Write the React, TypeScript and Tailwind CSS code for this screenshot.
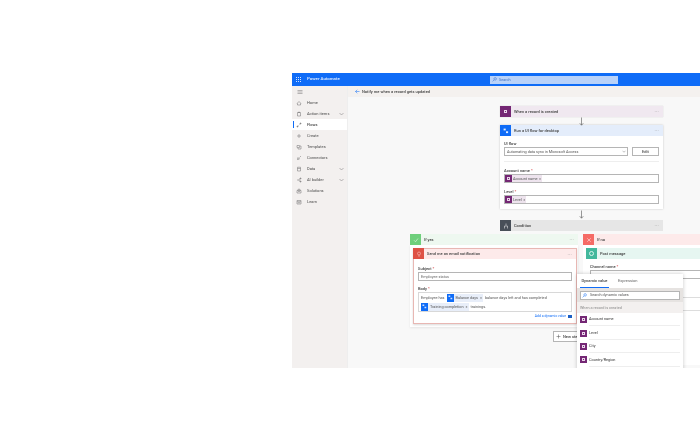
import React from "react";

const Purple = ({ size = "w-[7px] h-[7px]" }: { size?: string }) => (
  <span className={`${size} bg-[#742774] flex items-center justify-center shrink-0`}>
    <span className="w-[3px] h-[3px] border-[0.5px] border-[#e9d5e9]" />
  </span>
);

const BlueIcon = () => (
  <span className="w-[7px] h-[8px] bg-[#0f6cf7] flex items-center justify-center shrink-0">
    <svg width="5" height="5" viewBox="0 0 10 10">
      <rect x="1" y="1" width="3.5" height="3" fill="#cfe0ff" />
      <rect x="5" y="5.5" width="3.5" height="3" fill="#cfe0ff" />
    </svg>
  </span>
);

const Dots = () => <span className="ml-auto mr-[4px] text-[5px] leading-none text-[#9a9a9a] tracking-[0.2px]">···</span>;

const navItems: { label: string; chevron?: boolean; active?: boolean; d: string }[] = [
  { label: "Home", d: "M2 7 L6 3 L10 7 M3 6.5 V10 H9 V6.5" },
  { label: "Action items", chevron: true, d: "M3 3 H9 V10 H3 Z M5 2 H7 V3 H5 Z" },
  { label: "Flows", active: true, d: "M2 10 L5 7 M7 5 L10 2 M2 8 H4 V10 H2 Z M8 2 H10 V4 H8 Z" },
  { label: "Create", d: "M6 2 V10 M2 6 H10" },
  { label: "Templates", d: "M2 3 H7 V7 H2 Z M8 4 H10 V10 H4 V8" },
  { label: "Connectors", d: "M2 10 L5 7 M7 5 L10 2 M4 5 L7 8 L5 9 L3 7 Z" },
  { label: "Data", chevron: true, d: "M3 2.5 H9 V10 H3 Z M3 5 H9" },
  { label: "AI builder", chevron: true, d: "M2 6 H5 M5 6 L9 3 M5 6 L9 9 M8 2 H10 V4 H8 Z M8 8 H10 V10 H8 Z" },
  { label: "Solutions", d: "M2 5 H10 V10 H2 Z M4 5 V2.5 H8 V5 M4 7 H8" },
  { label: "Learn", d: "M2 3 H10 V10 H2 Z M2 5.5 H10 M4 7.5 H8" },
];

const Sidebar = () => (
  <aside className="w-[55px] shrink-0 bg-[#f3f0ef] flex flex-col">
    <div className="h-[11px] flex items-center pl-[5px]">
      <svg width="6" height="6" viewBox="0 0 12 12" stroke="#777" strokeWidth="1">
        <path d="M1 3 H11 M1 6 H11 M1 9 H11" />
      </svg>
    </div>
    {navItems.map((n) => (
      <div key={n.label} className={`h-[11px] flex items-center text-[4px] text-[#4a4a4a] ${n.active ? "bg-white font-medium" : ""}`}>
        <span className={`w-[1px] h-[7px] ml-[1px] ${n.active ? "bg-[#0f6cf7]" : ""}`} />
        <svg className="ml-[2px]" width="6" height="6" viewBox="0 0 12 12" fill="none" stroke="#6f6f6f" strokeWidth="1">
          <path d={n.d} />
        </svg>
        <span className="ml-[5px] whitespace-nowrap">{n.label}</span>
        {n.chevron && (
          <svg className="ml-auto mr-[3px]" width="5" height="4" viewBox="0 0 10 8" fill="none" stroke="#777" strokeWidth="1">
            <path d="M1 2 L5 6 L9 2" />
          </svg>
        )}
      </div>
    ))}
  </aside>
);

const Arrow = ({ h }: { h: string }) => (
  <div className={`${h} flex items-center justify-center`}>
    <svg width="5" height="9" viewBox="0 0 10 18" fill="none" stroke="#555" strokeWidth="1.2">
      <path d="M5 1 V16 M1.5 12.5 L5 16.5 L8.5 12.5" />
    </svg>
  </div>
);

const Token = ({ label }: { label: string }) => (
  <span className="h-[7px] flex items-center bg-[#eee4ee] text-[3.8px] text-[#555] pr-[1px] shrink-0">
    <Purple />
    <span className="ml-[1px]">{label}</span>
    <span className="ml-[1.5px] text-[#777]">×</span>
  </span>
);

const Field = ({ label, token }: { label: string; token: string }) => (
  <div className="mt-[6px]">
    <div className="text-[4px] leading-[5px] font-medium text-[#444]">
      {label} <span className="text-[#d13438]">*</span>
    </div>
    <div className="mt-[1px] h-[9px] border border-[#b5b5b5] flex items-center">
      <Token label={token} />
    </div>
  </div>
);

const BlueToken = ({ label }: { label: string }) => (
  <span className="h-[8px] flex items-center bg-[#e8eef9] text-[3.8px] text-[#555] pr-[1px] shrink-0">
    <BlueIcon />
    <span className="ml-[2px]">{label}</span>
    <span className="ml-[2px] text-[#777]">×</span>
  </span>
);

const MainColumn = () => (
  <div className="ml-[152px] w-[163px] pt-[9px] shrink-0">
    <div className="h-[11px] bg-[#f0e8f0] flex items-center shadow-[0_0_1px_rgba(0,0,0,0.2)]">
      <Purple size="w-[11px] h-[11px]" />
      <span className="ml-[3px] text-[4px] font-medium text-[#444]">When a record is created</span>
      <Dots />
    </div>
    <Arrow h="h-[8px]" />
    <div className="bg-white shadow-[0_0_2px_rgba(0,0,0,0.2)]">
      <div className="h-[11px] bg-[#e4edfb] flex items-center">
        <span className="w-[11px] h-[11px] bg-[#0f6cf7] flex items-center justify-center">
          <svg width="6" height="6" viewBox="0 0 10 10">
            <rect x="1" y="1" width="3.5" height="3" fill="#e3edff" />
            <rect x="5" y="5.5" width="3.5" height="3" fill="#e3edff" />
          </svg>
        </span>
        <span className="ml-[3px] text-[4px] font-medium text-[#444]">Run a UI flow for desktop</span>
        <Dots />
      </div>
      <div className="px-[4px] pt-[5px] h-[73px]">
        <div className="text-[4px] leading-[5px] font-medium text-[#444]">UI flow</div>
        <div className="mt-[1px] flex gap-[4px] pb-[5px] border-b border-[#eeeeee]">
          <div className="w-[124px] h-[9px] border border-[#b5b5b5] flex items-center pl-[2px] text-[3.8px] text-[#555]">
            Automating data sync in Microsoft Access
            <svg className="ml-auto mr-[1px]" width="4" height="3" viewBox="0 0 10 8" fill="none" stroke="#555" strokeWidth="1">
              <path d="M1 2 L5 6 L9 2" />
            </svg>
          </div>
          <div className="flex-1 h-[9px] border border-[#b5b5b5] flex items-center justify-center text-[4px] font-medium text-[#444]">Edit</div>
        </div>
        <Field label="Account name" token="Account name" />
        <Field label="Level" token="Level" />
      </div>
    </div>
    <Arrow h="h-[11px]" />
    <div className="h-[11px] bg-[#e6e6e6] flex items-center">
      <span className="w-[11px] h-[11px] bg-[#484f58] flex items-center justify-center">
        <svg width="6" height="6" viewBox="0 0 12 12" fill="none" stroke="#fff" strokeWidth="1">
          <path d="M6 1 V5 M3 11 V6 H9 V11" />
        </svg>
      </span>
      <span className="ml-[3px] text-[4px] font-medium text-[#444]">Condition</span>
      <Dots />
    </div>
  </div>
);

const YesBranch = () => (
  <div className="w-[168px] shrink-0">
    <div className="h-[11px] bg-[#eef8f0] flex items-center">
      <span className="w-[11px] h-[11px] bg-[#6fcf7c] flex items-center justify-center">
        <svg width="6" height="6" viewBox="0 0 12 12" fill="none" stroke="#fff" strokeWidth="1">
          <path d="M2 6.5 L5 9.5 L10 3" />
        </svg>
      </span>
      <span className="ml-[3px] text-[4px] font-medium text-[#444]">If yes</span>
      <Dots />
    </div>
    <div className="bg-white pl-[3px] pr-[1px] pt-[3px] pb-[3px] shadow-[0_1px_2px_rgba(0,0,0,0.08)]">
      <div className="h-[76px] border border-[#e8b7b3] shadow-[0_1px_2px_rgba(0,0,0,0.15)]">
        <div className="h-[10px] bg-[#fdeaea] flex items-center">
          <span className="w-[11px] h-[11px] -mt-[1px] -ml-[1px] bg-[#de5246] flex items-center justify-center">
            <svg width="6" height="6" viewBox="0 0 12 12" fill="none" stroke="#f9d5d2" strokeWidth="1">
              <circle cx="6" cy="5" r="3" />
              <path d="M4 10 H8" />
            </svg>
          </span>
          <span className="ml-[3px] text-[4px] font-medium text-[#444]">Send me an email notification</span>
          <Dots />
        </div>
        <div className="px-[4px] pt-[7px]">
          <div className="text-[4px] leading-[5px] font-medium text-[#444]">
            Subject <span className="text-[#d13438]">*</span>
          </div>
          <div className="mt-[1px] h-[9px] border border-[#b5b5b5] flex items-center pl-[2px] text-[3.8px] text-[#666]">Employee status</div>
          <div className="mt-[5px] text-[4px] leading-[5px] font-medium text-[#444]">
            Body <span className="text-[#d13438]">*</span>
          </div>
          <div className="mt-[1px] h-[20px] border border-[#d8d8d8] px-[2px] text-[3.8px] text-[#555] flex flex-col justify-center gap-[1px]">
            <div className="flex items-center gap-[2px] whitespace-nowrap">
              Employee has <BlueToken label="Balance days" /> balance days left and has completed
            </div>
            <div className="flex items-center gap-[2px] whitespace-nowrap">
              <BlueToken label="Training completion" /> trainings.
            </div>
          </div>
          <div className="mt-[2px] flex items-center justify-end gap-[2px] text-[3.4px] text-[#0f6cf7]">
            Add a dynamic value
            <span className="w-[4px] h-[3px] bg-[#1b5fc4]" />
          </div>
        </div>
      </div>
    </div>
    <div className="mt-[4px] ml-[143px] w-[40px] h-[11px] bg-white border border-[#b5b5b5] flex items-center pl-[2px] text-[4px] font-medium text-[#444] whitespace-nowrap">
      <svg width="5" height="5" viewBox="0 0 10 10" stroke="#555" strokeWidth="1">
        <path d="M5 1 V9 M1 5 H9" />
      </svg>
      <span className="ml-[2px]">New step</span>
    </div>
  </div>
);

const NoBranch = () => (
  <div className="ml-[5px] w-[140px] shrink-0">
    <div className="h-[11px] bg-[#fdeaea] flex items-center">
      <span className="w-[11px] h-[11px] bg-[#f56b66] flex items-center justify-center">
        <svg width="6" height="6" viewBox="0 0 12 12" stroke="#fff" strokeWidth="1">
          <path d="M2.5 2.5 L9.5 9.5 M9.5 2.5 L2.5 9.5" />
        </svg>
      </span>
      <span className="ml-[3px] text-[4px] font-medium text-[#444]">If no</span>
    </div>
    <div className="bg-white pl-[3px] pt-[3px] h-[120px]">
      <div className="h-[11px] bg-[#e6f6f1] flex items-center">
        <span className="w-[11px] h-[11px] bg-[#43b89c] flex items-center justify-center">
          <span className="w-[5px] h-[5px] rounded-full border border-[#d7f3ec]" />
        </span>
        <span className="ml-[3px] text-[4px] font-medium text-[#444]">Post message</span>
      </div>
      <div className="px-[4px] pt-[5px] text-[4px] leading-[5px] font-medium text-[#444]">
        Channel name <span className="text-[#d13438]">*</span>
      </div>
      <div className="ml-[4px] mt-[1px] h-[9px] border border-[#b5b5b5]" />
      <div className="mt-[18px] h-px bg-[#dddddd]" />
      <div className="mt-[12px] h-px bg-[#dddddd]" />
    </div>
  </div>
);

const dynamicItems = ["Account name", "Level", "City", "Country/Region"];

const DynamicPanel = () => (
  <div className="absolute left-[229px] top-[188px] w-[106px] h-[100px] bg-white shadow-[0_0_4px_rgba(0,0,0,0.22)]">
    <div className="h-[14px] flex items-end text-[4px] text-[#444]">
      <span className="ml-[3px] w-[29px] pb-[4px] font-medium text-center relative">
        Dynamic value
        <span className="absolute left-0 right-0 bottom-0 h-[1px] bg-[#0f6cf7]" />
      </span>
      <span className="ml-[9px] pb-[4px] text-[#666]">Expression</span>
    </div>
    <div className="h-[14px] bg-[#e6e3e1] flex items-center px-[3px]">
      <div className="w-full h-[9px] bg-white border border-[#b5b5b5] flex items-center pl-[1px] text-[3.8px] text-[#555]">
        <svg width="5" height="5" viewBox="0 0 12 12" fill="none" stroke="#0f6cf7" strokeWidth="1.2">
          <circle cx="7.5" cy="4.5" r="3" />
          <path d="M5 7 L1.5 10.5" />
        </svg>
        <span className="ml-[3px]">Search dynamic values</span>
      </div>
    </div>
    <div className="h-[11px] bg-[#f3f0ef] flex items-center pl-[3px] text-[3.8px] text-[#8a8a8a]">When a record is created</div>
    {dynamicItems.map((d) => (
      <div key={d} className="h-[13.4px] flex items-center pl-[3px] pr-[3px] text-[3.8px] text-[#333]">
        <Purple />
        <span className="ml-[2px] flex-1 h-full flex items-center border-b border-[#eeeeee]">{d}</span>
      </div>
    ))}
  </div>
);

export default function App() {
  return (
    <div className="w-[700px] h-[441px] bg-white overflow-hidden pt-[73px] pl-[292px]" style={{ fontFamily: 'Roboto, "Liberation Sans", sans-serif' }}>
      <div className="w-[408px] h-[295px] flex flex-col overflow-hidden bg-[#f8f8f8] blur-[0.3px]">
        <header className="h-[13px] bg-[#0f6cf7] flex items-center shrink-0">
          <svg className="ml-[4px]" width="5" height="5" viewBox="0 0 10 10" fill="#cfe0ff">
            <rect x="0" y="0" width="2" height="2" /><rect x="4" y="0" width="2" height="2" /><rect x="8" y="0" width="2" height="2" />
            <rect x="0" y="4" width="2" height="2" /><rect x="4" y="4" width="2" height="2" /><rect x="8" y="4" width="2" height="2" />
            <rect x="0" y="8" width="2" height="2" /><rect x="4" y="8" width="2" height="2" /><rect x="8" y="8" width="2" height="2" />
          </svg>
          <span className="ml-[6px] w-[34px] whitespace-nowrap text-[4.4px] font-medium text-[#e6efff]">Power Automate</span>
          <div className="ml-[149px] w-[128px] h-[8px] bg-[#b9d2f9] flex items-center pl-[2px] text-[3.8px] text-[#3d6fc0]">
            <svg width="5" height="5" viewBox="0 0 12 12" fill="none" stroke="#1e5fc8" strokeWidth="1.1">
              <circle cx="7.5" cy="4.5" r="3" />
              <path d="M5 7 L1.5 10.5" />
            </svg>
            <span className="ml-[2px]">Search</span>
          </div>
        </header>
        <div className="flex-1 flex min-h-0">
          <Sidebar />
          <main className="flex-1 min-w-0 flex flex-col relative border-l border-[#eeeeee]">
            <div className="h-[11px] bg-[#f4f1ef] flex items-center pl-[7px] shrink-0">
              <svg width="5" height="5" viewBox="0 0 10 10" fill="none" stroke="#0f6cf7" strokeWidth="1">
                <path d="M9 5 H1 M4.5 1.5 L1 5 L4.5 8.5" />
              </svg>
              <span className="ml-[2px] text-[4px] font-medium text-[#444]">Notify me when a record gets updated</span>
            </div>
            <MainColumn />
            <div className="flex ml-[62px] mt-[3px]">
              <YesBranch />
              <NoBranch />
            </div>
            <DynamicPanel />
          </main>
        </div>
      </div>
    </div>
  );
}
